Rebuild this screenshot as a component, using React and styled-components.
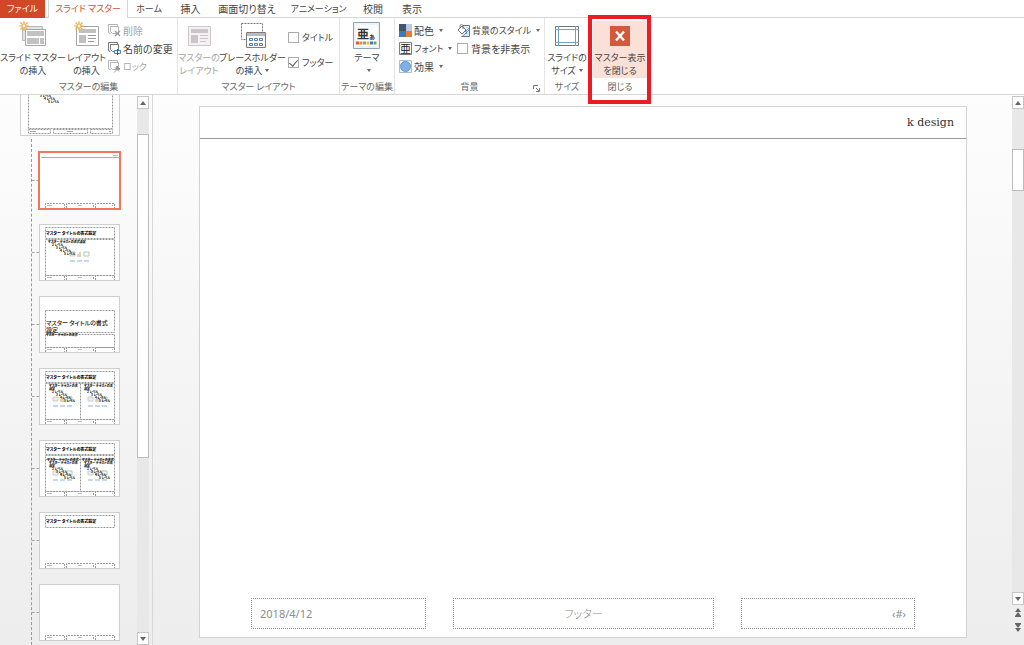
import React, { useState } from "react";
import styled, { createGlobalStyle, css } from "styled-components";

const GlobalStyle = createGlobalStyle`
  * { box-sizing: border-box; }
  body {
    margin: 0;
    background: #fff;
    color: #444;
    font-family: "Noto Sans CJK JP", sans-serif;
    font-feature-settings: "palt";
    font-size: 10px;
  }
  button, input { font: inherit; font-feature-settings: inherit; color: inherit; }
`;

const Page = styled.div`
  display: flex;
  flex-direction: column;
  height: 100vh;
  overflow: hidden;
`;

/* Tabs */
const TabBar = styled.nav`
  display: flex;
  height: 18px;
  border-bottom: 1px solid #d6d6d6;
`;

const Tab = styled.button`
  border: 0;
  background: none;
  padding: 0;
  width: ${(p) => p.$width}px;
  height: 17px;
  font-size: ${(p) => (p.$kana ? 9 : 10)}px;
  line-height: 16px;
  text-align: center;
  white-space: nowrap;
  ${(p) => p.$kind === "file" && css`
    background: #d24726;
    color: #fff;
    height: 18px;
    margin-right: 3px;
  `}
  ${(p) => p.$kind === "active" && css`
    background: #fff;
    color: #d2502f;
    height: 18px;
    border: solid #d6d6d6;
    border-width: 0 1px;
  `}
`;

/* Ribbon */
const RibbonBar = styled.div`
  display: flex;
  height: 77px;
  flex: none;
  border-bottom: 1px solid #d6d6d6;
`;

const Group = styled.section`
  position: relative;
  display: flex;
  flex-direction: column;
  flex: none;
  width: ${(p) => p.$width}px;
  padding: 3px 0 0;
  border-right: 1px solid #e4e4e4;
`;

const GroupBody = styled.div`
  display: flex;
  justify-content: ${(p) => p.$justify || "flex-start"};
  height: 58px;
`;

const GroupLabel = styled.div`
  display: flex;
  justify-content: center;
  font-size: 9px;
  line-height: 15px;
  color: #666;
  white-space: nowrap;
`;

const Launcher = styled.button`
  position: absolute;
  right: 3px;
  bottom: 2px;
  width: 8px;
  height: 8px;
  padding: 0;
  border: 0;
  background: none;
  svg { display: block; }
`;

const BigButton = styled.button`
  display: flex;
  flex-direction: column;
  align-items: center;
  flex: none;
  width: ${(p) => p.$width}px;
  height: 57px;
  padding: 0;
  border: 0;
  background: ${(p) => (p.$hot ? "#fbe0d8" : "none")};
  font-size: 9px;
  line-height: 13px;
  white-space: nowrap;
  color: ${(p) => (p.disabled ? "#a5a5a5" : "#444")};
  svg { flex: none; }
  > span { display: block; }
`;

const IconSlot = styled.span`
  height: 30px;
`;

const Rows = styled.div`
  display: flex;
  flex-direction: column;
  padding-left: ${(p) => p.$indent || 0}px;
  padding-top: ${(p) => p.$top || 0}px;
  gap: ${(p) => p.$gap || 0}px;
  width: ${(p) => p.$width}px;
`;

const SmallButton = styled.button`
  display: flex;
  align-items: center;
  gap: 2px;
  height: 18px;
  padding: 0;
  border: 0;
  background: none;
  font-size: ${(p) => (p.$kana ? 9 : 10)}px;
  white-space: nowrap;
  color: ${(p) => (p.disabled ? "#a5a5a5" : "#444")};
  svg { flex: none; }
`;

const CheckLabel = styled.label`
  display: flex;
  align-items: center;
  gap: 3px;
  height: 18px;
  font-size: ${(p) => (p.$kana ? 9 : 10)}px;
  white-space: nowrap;
`;

const CheckInput = styled.input`
  appearance: none;
  display: flex;
  justify-content: center;
  width: 11px;
  height: 11px;
  margin: 0;
  flex: none;
  border: 1px solid #ababab;
  background: #fff;
  &:checked::before {
    content: "";
    width: 4px;
    height: 7px;
    border: solid #555;
    border-width: 0 1px 1px 0;
    transform: rotate(40deg);
  }
`;

const Caret = styled.i`
  display: inline-block;
  margin-left: 3px;
  vertical-align: 2px;
  border: solid transparent;
  border-width: 3px 2px 0;
  border-top-color: #666;
`;

const Highlight = styled.div`
  position: absolute;
  inset: -3px -1px -10px -2px;
  z-index: 5;
  border: 4px solid #ed1c24;
  pointer-events: none;
`;

/* Workspace */
const Workspace = styled.main`
  display: flex;
  flex: 1;
  min-height: 0;
  background: linear-gradient(#fdfdfd, #ededed);
`;

const ThumbPane = styled.aside`
  display: flex;
  flex: none;
  width: 153px;
  border-right: 1px solid #d8d8d8;
`;

const ThumbScroller = styled.div`
  display: flex;
  flex-direction: column;
  justify-content: flex-end;
  width: 137px;
  overflow: hidden;
`;

const MasterRow = styled.div`
  flex: none;
  padding-left: 20px;
`;

const LayoutList = styled.div`
  display: flex;
  flex-direction: column;
  flex: none;
  gap: 15px;
  margin: 3px 0 0 31px;
  padding: 13px 0 4px;
  border-left: 1px dashed #999;
`;

const LayoutRow = styled.div`
  display: flex;
  align-items: center;
`;

const Tick = styled.span`
  width: 7px;
  border-top: 1px dashed #a5a5a5;
`;

const Thumb = styled.button`
  display: block;
  padding: 0;
  width: ${(p) => (p.$master ? 100 : 81)}px;
  height: ${(p) => (p.$master ? 71 : 57)}px;
  background: #fff;
  border: 1px solid #cfcfcf;
  outline: ${(p) => (p.$selected ? "2px solid #f0775a" : "0")};
  outline-offset: -1px;
  svg { display: block; }
`;

const ScrollBar = styled.div`
  display: flex;
  flex-direction: column;
  width: ${(p) => p.$width}px;
  flex: none;
  padding-top: 1px;
`;

const ScrollButton = styled.button`
  display: flex;
  align-items: center;
  justify-content: center;
  flex: none;
  height: 13px;
  padding: 0;
  border: 1px solid #c6c6c6;
  background: #fff;
`;

const Track = styled.div`
  display: flex;
  flex-direction: column;
  flex: 1;
  background: #e8e8e8;
`;

const Space = styled.span`
  flex: ${(p) => p.$grow};
`;

const Handle = styled.div`
  flex: ${(p) => p.$grow};
  background: #fff;
  border: 1px solid #bcbcbc;
`;

const PageButtons = styled.div`
  display: flex;
  flex-direction: column;
  align-items: center;
  gap: 5px;
  height: 40px;
  padding-top: 2px;
`;

const PageButton = styled.button`
  display: block;
  height: 10px;
  padding: 0;
  border: 0;
  background: none;
  svg { display: block; }
`;

const Canvas = styled.div`
  flex: 1;
  min-width: 0;
  padding: 11px 45px 7px 46px;
`;

const Slide = styled.article`
  display: flex;
  flex-direction: column;
  justify-content: space-between;
  height: 100%;
  background: #fff;
  border: 1px solid #d2d2d2;
`;

const SlideHeader = styled.header`
  height: 32px;
  padding-right: 12px;
  border-bottom: 1px solid #9a9a9a;
  font: 11px/32px "DejaVu Serif", serif;
  text-align: right;
  color: #333;
`;

const SlideFooter = styled.footer`
  display: grid;
  grid-template-columns: 175fr 261fr 174fr;
  gap: 27px;
  padding: 0 51px 8px;
`;

const Placeholder = styled.div`
  height: 31px;
  padding: 0 8px;
  border: 1px dotted #999;
  font-family: ${(p) => (p.$jp ? '"Noto Sans CJK JP"' : '"Noto Sans"')}, sans-serif;
  font-size: 11px;
  font-weight: ${(p) => (p.$jp ? 300 : 400)};
  line-height: 29px;
  text-align: ${(p) => p.$align};
  color: #8c8c8c;
`;

/* Icons */
const Burst = () => (
  <g stroke="#edb04c" strokeWidth="1.2">
    <path d="M5 0v10M0 5h10M1.5 1.5l7 7M8.5 1.5l-7 7" />
    <circle cx="5" cy="5" r="2" fill="#fff" />
  </g>
);

const SlideMasterIcon = () => (
  <svg width="28" height="27" viewBox="0 0 28 27" fill="none">
    <path d="M3.500 5.500h20v14h-20z" stroke="#b5b5b5" fill="#e4e4e4" />
    <path d="M6.500 8.500h20v16h-20z" stroke="#a5a5a5" fill="#fff" />
    <path d="M8 10h17v5H8zM8 17h12v6H8zM21 17h4v6h-4z" fill="#c2c2c2" />
    <Burst />
  </svg>
);

const LayoutIcon = ({ burst, muted }) => (
  <svg width="26" height="27" viewBox="0 0 26 27" fill="none">
    <path d="M2.500 5.500h22v19h-22z" stroke={muted ? "#cfc6cc" : "#a5a5a5"} fill={muted ? "#f5f0f3" : "#fff"} />
    <path d="M5 8h17v4H5zM5 14h7v8H5z" fill={muted ? "#cdc4ca" : "#c0c0c0"} />
    <path d="M14 14.500h8M14 17.500h8M14 20.500h6" stroke={muted ? "#cdc4ca" : "#999"} />
    {burst && <Burst />}
  </svg>
);

const PlaceholderIcon = () => (
  <svg width="26" height="28" viewBox="0 0 26 28" fill="none">
    <path d="M1.500 2.500h21v16h-21z" stroke="#777" strokeDasharray="2 1" />
    <path d="M6.500 11.500h19v15h-19z" stroke="#7d7d7d" fill="#fff" />
    <path d="M7 12h18v3H7z" fill="#bbb" />
    <path d="M9.500 17.500h3v2h-3zM14.500 17.500h3v2h-3zM19.500 17.500h3v2h-3zM9.500 22.500h3v2h-3zM14.500 22.500h3v2h-3zM19.500 22.500h3v2h-3z" stroke="#4c80b4" />
  </svg>
);

const ThemeIcon = () => (
  <svg width="28" height="28" viewBox="0 0 28 28">
    <path d="M.5 1.500h26v26H.500z" fill="#eef3f9" stroke="#8fa3bb" />
    <path d="M3 4h21v21H3z" fill="#fff" />
    <text x="4" y="18" fontSize="12" fontWeight="700" fill="#333">亜</text>
    <text x="16" y="18" fontSize="7" fontWeight="700" fill="#333">ぁ</text>
    {["#d45f2c", "#ee8b33", "#999", "#f4b92e", "#3d7bc0", "#6aa84f"].map((c, i) => (
      <path key={c} d={`M${3 + i * 3.5} 20.500h3v3h-3z`} fill={c} />
    ))}
  </svg>
);

const SizeIcon = () => (
  <svg width="26" height="27" viewBox="0 0 26 27" fill="none">
    <path d="M1.500 5.500h23v19h-23z" stroke="#777" fill="#fff" />
    <path d="M1 8.500h24M1 21.500h24M4.500 5v20M21.500 5v20" stroke="#6f9fce" />
  </svg>
);

const CloseIcon = () => (
  <svg width="22" height="27" viewBox="0 0 22 27">
    <path d="M1 5h20v20H1z" fill="#d6583b" />
    <path d="M7 10.500l8 9M15 10.500l-8 9" stroke="#fff" strokeWidth="2.400" />
  </svg>
);

const SheetIcon = ({ mark, dark }) => (
  <svg width="13" height="13" viewBox="0 0 13 13" fill="none">
    <path d="M2.500 9.500H2q-1.500 0-1.500-1.500V.500h9v2" stroke={dark ? "#777" : "#b4b4b4"} />
    <path d="M2.500 2.500h8v7h-6l-2-2z" stroke={dark ? "#777" : "#b4b4b4"} fill="#fff" />
    {mark === "x" && <path d="M7 7l5 5M12 7l-5 5" stroke="#999" strokeWidth="1.300" />}
    {mark === "a" && (
      <g>
        <path d="M6.500 8.500h6v3h-6z" fill="#fff" stroke="#4c80b4" />
        <path d="M9.500 7v6" stroke="#555" />
      </g>
    )}
    {mark === "pin" && <path d="M6 12.500l3-3M7 7.500l4 4M9 6l3 3-2 1-2-2z" stroke="#999" fill="#999" />}
  </svg>
);

const ColorsIcon = () => (
  <svg width="13" height="13" viewBox="0 0 13 13">
    <path d="M0 0h7v7H0z" fill="#44546a" />
    <path d="M7 0h6v7H7z" fill="#b8cbe2" />
    <path d="M0 7h7v6H0z" fill="#3f7ab8" />
    <path d="M7 7h6v6H7z" fill="#e87d37" />
  </svg>
);

const FontsIcon = () => (
  <svg width="13" height="13" viewBox="0 0 13 13">
    <path d="M.5 .5h12v12H.500z" fill="#fff" stroke="#7d7d7d" />
    <text x="1" y="11" fontSize="11" fill="#222">亜</text>
  </svg>
);

const EffectsIcon = () => (
  <svg width="13" height="13" viewBox="0 0 13 13">
    <path d="M.5 .5h12v12H.500z" fill="#edf3fa" stroke="#a9bdd6" />
    <circle cx="6.500" cy="6.500" r="5" fill="#80b1e2" stroke="#5f97cf" />
  </svg>
);

const BackgroundIcon = () => (
  <svg width="13" height="13" viewBox="0 0 13 13" fill="none">
    <path d="M6 1.500h6.500v11h-8" stroke="#777" fill="#dfeaf6" />
    <path d="M8 8l4-4M6 12l6-6" stroke="#5f97cf" />
    <path d="M1 6l4-4 4 4-4 4z" fill="#fff" stroke="#777" />
    <path d="M3 4V1.500q1.500-2 3 0V5" stroke="#777" />
    <path d="M9 7q2 2 1 3t-1-3" fill="#3f7ab8" />
  </svg>
);

const Arrow = ({ up }) => (
  <svg width="6" height="4" viewBox="0 0 6 4">
    <path d={up ? "M0 4l3-4 3 4z" : "M0 0l3 4 3-4z"} fill="#666" />
  </svg>
);

const DoubleArrow = ({ up }) => (
  <svg width="8" height="9" viewBox="0 0 8 9">
    <path d={up ? "M1 4l3-4 3 4zM1 8l3-4 3 4zM1 8h6v1H1z" : "M1 5l3 4 3-4zM1 1l3 4 3-4zM1 0h6v1H1z"} fill="#666" />
  </svg>
);

/* Thumbnail drawings */
const dash = { fill: "none", stroke: "#999", strokeDasharray: "2 1" };

const FooterBoxes = () => (
  <g>
    <path {...dash} d="M5.500 55v-4.500h19v5M26.500 55v-4.500h27v5M55.500 55v-4.500h19v5" />
    <path d="M7 52.500h5M38 52.500h4M72 52.500h1" stroke="#bbb" />
  </g>
);

const ThumbTitle = ({ y = 10 }) => (
  <text x="6" y={y} fontSize="4" fontWeight="900" fill="#111">マスター タイトルの書式設定</text>
);

const Bullets = ({ x, y, count = 4 }) => (
  <g fontSize="3" fontWeight="900" fill="#111">
    {[2, 3, 4, 5].slice(4 - count).map((level, i) => (
      <text key={level} x={x + i * 4} y={y + i * 3}>{level} レベル</text>
    ))}
  </g>
);

const MediaIcons = ({ x, y }) => (
  <g>
    <path d={`M${x} ${y}h5v4h-5z`} fill="#eee" stroke="#ccc" />
    <path d={`M${x + 8} ${y + 5}v-3M${x + 10} ${y + 5}v-5`} stroke="#e3c08c" strokeWidth="1.500" />
    <path d={`M${x + 14} ${y}h5v4h-5z`} fill="#fff" stroke="#a9c9b5" />
    <path d={`M${x} ${y + 9}h5M${x + 7} ${y + 9}h5M${x + 14} ${y + 9}h5`} stroke="#c3d8ee" strokeWidth="2" />
  </g>
);

const DoubleBody = ({ compare }) => (
  <g>
    <path {...dash} d={`M5.500 14.500h69v36h-69zM40.500 14.500v36${compare ? "M5.500 18.500h69" : ""}`} />
    {[6, 41].map((x) => (
      <g key={x}>
        {compare && <text x={x + 1} y="20" fontSize="3" fontWeight="900" fill="#111">マスター テキストの書式</text>}
        <text x={x + 3} y={compare ? 23 : 18} fontSize="3" fontWeight="900" fill="#111">マスター テキストの書</text>
        <text x={x + 3} y={compare ? 26 : 21} fontSize="3" fontWeight="900" fill="#111">設定</text>
        <MediaIcons x={x + 7} y={compare ? 30 : 28} />
        <Bullets x={x + 6} y={compare ? 29 : 24} />
      </g>
    ))}
  </g>
);

const drawings = {
  blank: null,
  header: (
    <g>
      <path d="M1 4.500h78" stroke="#aaa" />
      <path d="M73 2.500h5" stroke="#bbb" />
    </g>
  ),
  content: (
    <g>
      <path {...dash} d="M5.500 2.500h69v11h-69zM5.500 14.500h69v36h-69z" />
      <ThumbTitle />
      <text x="8" y="18" fontSize="3" fontWeight="900" fill="#111">マスター テキストの書式設定</text>
      <MediaIcons x={30} y={27} />
      <Bullets x={12} y={21} />
    </g>
  ),
  section: (
    <g>
      <path {...dash} d="M5.500 13.500h69v22h-69zM5.500 37.500h69v13h-69z" />
      <g fontSize="6" fontWeight="500" fill="#222">
        <text x="6" y="28">マスター タイトルの書式</text>
        <text x="6" y="35">設定</text>
      </g>
      <text x="6" y="39" fontSize="3" fontWeight="900" fill="#111">マスター テキストの書式</text>
    </g>
  ),
  two: (
    <g>
      <path {...dash} d="M5.500 2.500h69v11h-69z" />
      <ThumbTitle />
      <DoubleBody />
    </g>
  ),
  compare: (
    <g>
      <path {...dash} d="M5.500 2.500h69v11h-69z" />
      <ThumbTitle />
      <DoubleBody compare />
    </g>
  ),
  title: (
    <g>
      <path {...dash} d="M5.500 2.500h69v12h-69z" />
      <ThumbTitle />
    </g>
  ),
};

const MasterDrawing = () => (
  <svg width="98" height="69" viewBox="0 0 98 69">
    <path {...dash} d="M7.500 3.500h84v12h-84zM7.500 17.500h84v45h-84zM7.500 63.500h22v4h-22zM32.500 63.500h34v4h-34zM69.500 63.500h22v4h-22z" />
    <path d="M9 65.500h6M46 65.500h6M88 65.500h2" stroke="#aaa" />
    <Bullets x={19} y={31} count={3} />
  </svg>
);

const layouts = ["header", "content", "section", "two", "compare", "title", "blank"];

const tabs = [
  { label: "ファイル", width: 45, kind: "file", kana: true },
  { label: "スライド マスター", width: 80, kind: "active", kana: true },
  { label: "ホーム", width: 42, kana: true },
  { label: "挿入", width: 41 },
  { label: "画面切り替え", width: 72 },
  { label: "アニメーション", width: 71, kana: true },
  { label: "校閲", width: 38 },
  { label: "表示", width: 40 },
];

function Check({ label, initial = false, kana }) {
  const [on, setOn] = useState(initial);
  return (
    <CheckLabel $kana={kana}>
      <CheckInput type="checkbox" checked={on} onChange={() => setOn(!on)} />
      {label}
    </CheckLabel>
  );
}

function Big({ icon, lines, caret, ...rest }) {
  return (
    <BigButton {...rest}>
      <IconSlot>{icon}</IconSlot>
      {lines.map((line, i) => (
        <span key={line}>
          {line}
          {caret && i === lines.length - 1 && <Caret />}
        </span>
      ))}
    </BigButton>
  );
}

function Ribbon() {
  return (
    <RibbonBar>
      <Group $width={178}>
        <GroupBody>
          <Big $width={66} icon={<SlideMasterIcon />} lines={["スライド マスター", "の挿入"]} />
          <Big $width={41} icon={<LayoutIcon burst />} lines={["レイアウト", "の挿入"]} />
          <Rows $indent={1} $width={70}>
            <SmallButton disabled><SheetIcon mark="x" />削除</SmallButton>
            <SmallButton><SheetIcon mark="a" dark />名前の変更</SmallButton>
            <SmallButton disabled $kana><SheetIcon mark="pin" />ロック</SmallButton>
          </Rows>
        </GroupBody>
        <GroupLabel>マスターの編集</GroupLabel>
      </Group>
      <Group $width={162}>
        <GroupBody>
          <Big $width={42} disabled icon={<LayoutIcon muted />} lines={["マスターの", "レイアウト"]} />
          <Big $width={65} caret icon={<PlaceholderIcon />} lines={["プレースホルダー", "の挿入"]} />
          <Rows $indent={3} $top={7} $gap={7} $width={54}>
            <Check label="タイトル" kana />
            <Check label="フッター" kana initial />
          </Rows>
        </GroupBody>
        <GroupLabel>マスター レイアウト</GroupLabel>
      </Group>
      <Group $width={55}>
        <GroupBody $justify="center">
          <BigButton $width={50}>
            <IconSlot><ThemeIcon /></IconSlot>
            <span>テーマ</span>
            <span><Caret /></span>
          </BigButton>
        </GroupBody>
        <GroupLabel>テーマの編集</GroupLabel>
      </Group>
      <Group $width={150}>
        <GroupBody>
          <Rows $indent={4} $width={62}>
            <SmallButton><ColorsIcon />配色<Caret /></SmallButton>
            <SmallButton $kana><FontsIcon />フォント<Caret /></SmallButton>
            <SmallButton><EffectsIcon />効果<Caret /></SmallButton>
          </Rows>
          <Rows $width={86}>
            <SmallButton $kana><BackgroundIcon />背景のスタイル<Caret /></SmallButton>
            <Check label="背景を非表示" />
          </Rows>
        </GroupBody>
        <GroupLabel>背景</GroupLabel>
        <Launcher aria-label="背景の書式設定">
          <svg width="7" height="7" viewBox="0 0 7 7" fill="none" stroke="#777">
            <path d="M.5 4V.500H5M3 3l3 3M6.500 3v3.500H3" />
          </svg>
        </Launcher>
      </Group>
      <Group $width={45}>
        <GroupBody $justify="center">
          <Big $width={42} caret icon={<SizeIcon />} lines={["スライドの", "サイズ"]} />
        </GroupBody>
        <GroupLabel>サイズ</GroupLabel>
      </Group>
      <Group $width={61}>
        <GroupBody $justify="center">
          <Big $width={54} $hot icon={<CloseIcon />} lines={["マスター表示", "を閉じる"]} />
        </GroupBody>
        <GroupLabel>閉じる</GroupLabel>
        <Highlight />
      </Group>
    </RibbonBar>
  );
}

export default function App() {
  const [selected, setSelected] = useState("header");
  return (
    <Page>
      <GlobalStyle />
      <TabBar>
        {tabs.map(({ label, width, kind, kana }) => (
          <Tab key={label} $width={width} $kind={kind} $kana={kana}>{label}</Tab>
        ))}
      </TabBar>
      <Ribbon />
      <Workspace>
        <ThumbPane>
          <ThumbScroller>
            <MasterRow>
              <Thumb $master aria-label="スライド マスター"><MasterDrawing /></Thumb>
            </MasterRow>
            <LayoutList>
              {layouts.map((name) => (
                <LayoutRow key={name}>
                  <Tick />
                  <Thumb $selected={name === selected} onClick={() => setSelected(name)} aria-label={name}>
                    <svg width="79" height="55" viewBox="0 0 79 55">
                      {drawings[name]}
                      <FooterBoxes />
                    </svg>
                  </Thumb>
                </LayoutRow>
              ))}
            </LayoutList>
          </ThumbScroller>
          <ScrollBar $width={12}>
            <ScrollButton aria-label="上へ"><Arrow up /></ScrollButton>
            <Track>
              <Space $grow={25} />
              <Handle $grow={325} />
              <Space $grow={175} />
            </Track>
            <ScrollButton aria-label="下へ"><Arrow /></ScrollButton>
          </ScrollBar>
        </ThumbPane>
        <Canvas>
          <Slide>
            <SlideHeader>k design</SlideHeader>
            <SlideFooter>
              <Placeholder $align="left">2018/4/12</Placeholder>
              <Placeholder $align="center" $jp>フッター</Placeholder>
              <Placeholder $align="right">‹#›</Placeholder>
            </SlideFooter>
          </Slide>
        </Canvas>
        <ScrollBar $width={12}>
          <ScrollButton aria-label="前へ"><Arrow up /></ScrollButton>
          <Track>
            <Space $grow={40} />
            <Handle $grow={40} />
            <Space $grow={404} />
          </Track>
          <ScrollButton aria-label="次へ"><Arrow /></ScrollButton>
          <PageButtons>
            <PageButton aria-label="前のスライド"><DoubleArrow up /></PageButton>
            <PageButton aria-label="次のスライド"><DoubleArrow /></PageButton>
          </PageButtons>
        </ScrollBar>
      </Workspace>
    </Page>
  );
}
